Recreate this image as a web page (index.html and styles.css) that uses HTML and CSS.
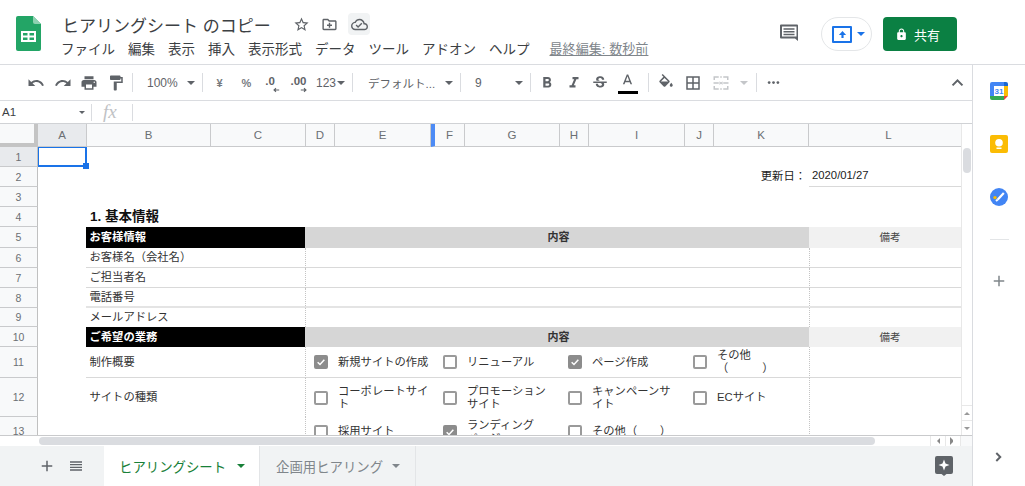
FILE: index.html
```html
<!DOCTYPE html>
<html lang="ja">
<head>
<meta charset="utf-8">
<title>ヒアリングシート のコピー</title>
<link rel="stylesheet" href="styles.css">
</head>
<body>
<header class="topbar">
  <svg class="logo" viewBox="0 0 25 35"><path d="M2 0h15l8 8v25a2 2 0 0 1-2 2H2a2 2 0 0 1-2-2V2a2 2 0 0 1 2-2z" fill="#23a566"/><path d="M17 0l8 8h-6a2 2 0 0 1-2-2z" fill="#8ed1b1"/><path d="M5 15h15v11H5zm2 2v2.5h4.5V17zm6.500 0v2.500H18V17zM7 21.500V24h4.500v-2.500zm6.500 0V24H18v-2.500z" fill="#fff" fill-rule="evenodd"/></svg>
  <div class="titleblock">
    <div class="titlerow">
      <span class="doctitle">ヒアリングシート のコピー</span>
      <svg class="ticon star" viewBox="0 0 24 24"><path d="M22 9.240l-7.190-.62L12 2 9.190 8.630 2 9.240l5.460 4.730L5.820 21 12 17.270 18.180 21l-1.630-7.030L22 9.240zM12 15.400l-3.760 2.270 1-4.280-3.320-2.880 4.380-.38L12 6.100l1.710 4.040 4.380.38-3.320 2.880 1 4.280L12 15.400z"/></svg>
      <svg class="ticon folder" viewBox="0 0 24 24"><path d="M20 6h-8l-2-2H4c-1.100 0-2 .9-2 2v12c0 1.100.9 2 2 2h16c1.100 0 2-.9 2-2V8c0-1.100-.9-2-2-2zm0 12H4V6h5.170l2 2H20v10zm-9-1.500h2V14h2.500v-2H13V9.500h-2V12H8.500v2H11z"/></svg>
      <span class="cloudbox"><svg class="ticon" viewBox="0 0 24 24"><path d="M19.350 10.040C18.670 6.590 15.640 4 12 4 9.110 4 6.600 5.640 5.350 8.040 2.340 8.360 0 10.910 0 14c0 3.310 2.690 6 6 6h13c2.760 0 5-2.240 5-5 0-2.640-2.050-4.780-4.650-4.960zM19 18H6c-2.210 0-4-1.790-4-4 0-2.050 1.530-3.760 3.560-3.970l1.070-.11.5-.95C8.080 7.140 9.940 6 12 6c2.620 0 4.880 1.860 5.390 4.430l.3 1.500 1.530.11c1.560.1 2.780 1.410 2.780 2.960 0 1.650-1.350 3-3 3zm-9-3.820l-2.090-2.090L6.500 13.500 10 17l6.010-6.010-1.410-1.410z"/></svg></span>
    </div>
    <nav class="menus">
      <span>ファイル</span><span>編集</span><span>表示</span><span>挿入</span><span>表示形式</span><span>データ</span><span>ツール</span><span>アドオン</span><span>ヘルプ</span><a class="lastedit">最終編集: 数秒前</a>
    </nav>
  </div>
  <div class="topright">
    <svg class="commenticon" viewBox="0 0 20 20"><path d="M2 1.500h16a1 1 0 0 1 1 1v15.500L16 15.500H2a1 1 0 0 1-1-1v-12a1 1 0 0 1 1-1zm1 2v10h14.500l0 .6 0-10.600zM4.500 5.200h11v1.500h-11zm0 2.800h11v1.500h-11zm0 2.800h11v1.500h-11z" fill="#5f6368" fill-rule="evenodd"/></svg>
    <div class="present"><span class="presentbox"><svg viewBox="0 0 10 10"><path d="M5 1L9 5.500H6.200V9H3.800V5.500H1z" fill="#1a73e8"/></svg></span><i class="caret blue"></i></div>
    <div class="share"><svg viewBox="0 0 24 24"><path d="M18 8h-1V6c0-2.760-2.240-5-5-5S7 3.240 7 6v2H6c-1.100 0-2 .9-2 2v10c0 1.100.9 2 2 2h12c1.100 0 2-.9 2-2V10c0-1.100-.9-2-2-2zm-6 9c-1.100 0-2-.9-2-2s.9-2 2-2 2 .9 2 2-.9 2-2 2zm3.100-9H8.900V6c0-1.710 1.390-3.100 3.100-3.100 1.710 0 3.100 1.390 3.100 3.100v2z"/></svg><span>共有</span></div>
  </div>
</header>
<div class="body">
  <main class="main">
    <div class="toolbar">
      <span class="btn b1"><svg viewBox="0 0 24 24"><path d="M12.500 8c-2.650 0-5.050.99-6.900 2.600L2 7v9h9l-3.620-3.620c1.390-1.160 3.160-1.880 5.120-1.880 3.540 0 6.550 2.310 7.600 5.500l2.370-.78C21.080 11.030 17.150 8 12.500 8z"/></svg></span>
      <span class="btn"><svg viewBox="0 0 24 24"><path d="M18.400 10.600C16.550 8.990 14.150 8 11.500 8c-4.650 0-8.580 3.030-9.960 7.220L3.900 16c1.050-3.190 4.050-5.500 7.600-5.500 1.950 0 3.730.72 5.120 1.880L13 16h9V7l-3.600 3.600z"/></svg></span>
      <span class="btn"><svg viewBox="0 0 24 24"><path d="M19 8H5c-1.660 0-3 1.340-3 3v6h4v4h12v-4h4v-6c0-1.660-1.340-3-3-3zm-3 11H8v-5h8v5zm3-7c-.55 0-1-.45-1-1s.45-1 1-1 1 .45 1 1-.45 1-1 1zm-1-9H6v4h12V3z"/></svg></span>
      <span class="btn"><svg viewBox="0 0 24 24"><path d="M18 4V3c0-.55-.45-1-1-1H5c-.55 0-1 .45-1 1v4c0 .55.45 1 1 1h12c.55 0 1-.45 1-1V6h1v4H9v11c0 .55.45 1 1 1h2c.55 0 1-.45 1-1v-9h8V4h-3z"/></svg></span>
      <i class="sep s1"></i>
      <span class="combo zoom">100%<i class="caret"></i></span>
      <i class="sep"></i>
      <span class="fmt f1">¥</span><span class="fmt">%</span>
      <span class="fmt dec d1"><b>.0</b><svg viewBox="0 0 10 6"><path d="M9 3H3M5 .8L2.500 3 5 5.200" fill="none" stroke="#5f6368" stroke-width="1.300"/></svg></span>
      <span class="fmt dec d2"><b>.00</b><svg viewBox="0 0 10 6"><path d="M1 3h6M5 .8L7.500 3 5 5.200" fill="none" stroke="#5f6368" stroke-width="1.300"/></svg></span>
      <span class="num">123<i class="caret"></i></span>
      <i class="sep"></i>
      <span class="combo font">デフォルト...<i class="caret"></i></span>
      <i class="sep"></i>
      <span class="combo size">9<i class="caret"></i></span>
      <i class="sep"></i>
      <span class="btn b3"><svg viewBox="0 0 24 24"><path d="M15.600 10.790c.97-.67 1.650-1.770 1.650-2.790 0-2.260-1.750-4-4-4H7v14h7.040c2.090 0 3.710-1.700 3.710-3.790 0-1.520-.86-2.820-2.150-3.420zM10 6.500h3c.83 0 1.500.67 1.500 1.500s-.67 1.500-1.500 1.500h-3v-3zm3.500 9H10v-3h3.500c.83 0 1.500.67 1.500 1.500s-.67 1.500-1.500 1.500z"/></svg></span>
      <span class="btn"><svg viewBox="0 0 24 24"><path d="M10 4v3h2.210l-3.420 8H6v3h8v-3h-2.210l3.420-8H18V4z"/></svg></span>
      <span class="btn"><svg viewBox="0 0 24 24"><path d="M7.240 8.750c-.26-.48-.39-1.030-.39-1.670 0-.61.13-1.160.4-1.670.26-.5.63-.93 1.110-1.290.48-.35 1.050-.63 1.700-.83.66-.19 1.390-.29 2.180-.29.81 0 1.540.11 2.210.34.66.22 1.230.54 1.690.94.47.4.83.88 1.080 1.430.25.55.38 1.150.38 1.810h-3.010c0-.31-.05-.59-.15-.85-.09-.27-.24-.49-.44-.68-.2-.19-.45-.33-.75-.44-.3-.1-.66-.16-1.060-.16-.39 0-.74.04-1.030.13-.29.09-.53.21-.72.36-.19.16-.34.34-.44.55-.1.21-.15.43-.15.66 0 .48.25.88.74 1.210.38.25.77.48 1.410.7H7.390c-.05-.08-.11-.17-.15-.25zM21 12v-2H3v2h9.620c.18.07.4.14.55.2.37.17.66.34.87.51.21.17.35.36.43.57.07.2.11.43.11.69 0 .23-.05.45-.14.66-.09.2-.23.38-.42.53-.19.15-.42.26-.71.35-.29.08-.63.13-1.010.13-.43 0-.83-.04-1.180-.13s-.66-.23-.91-.42c-.25-.19-.45-.44-.59-.75-.14-.31-.25-.76-.25-1.210H6.400c0 .55.08 1.130.24 1.580.16.45.37.85.65 1.210.28.35.6.66.98.92.37.26.78.48 1.220.65.44.17.9.3 1.380.39.48.08.96.13 1.440.13.8 0 1.530-.09 2.180-.28s1.210-.45 1.670-.79c.46-.34.82-.77 1.070-1.270s.38-1.070.38-1.710c0-.6-.1-1.140-.31-1.610-.05-.11-.11-.23-.17-.33H21z"/></svg></span>
      <span class="btn color"><svg viewBox="0 0 24 24"><path d="M11 2L5.500 16h2.250l1.120-3h6.250l1.120 3h2.250L13 2h-2zm-1.380 9L12 4.670 14.380 11H9.620z"/></svg><i class="colorbar"></i></span>
      <i class="sep s2"></i>
      <span class="btn b4"><svg viewBox="0 0 24 24"><path d="M16.560 8.940L7.620 0 6.210 1.410l2.380 2.380-5.150 5.150c-.59.59-.59 1.540 0 2.120l5.500 5.500c.29.29.68.44 1.060.44s.77-.15 1.060-.44l5.500-5.500c.59-.58.59-1.530 0-2.120zM5.210 10L10 5.210 14.790 10H5.210zM19 11.500s-2 2.170-2 3.500c0 1.100.9 2 2 2s2-.9 2-2c0-1.330-2-3.500-2-3.500z"/></svg></span>
      <span class="btn"><svg viewBox="0 0 24 24"><path d="M3 3v18h18V3H3zm8 16H5v-6h6v6zm0-8H5V5h6v6zm8 8h-6v-6h6v6zm0-8h-6V5h6v6z"/></svg></span>
      <span class="btn merge"><svg viewBox="0 0 24 24"><path d="M2 3h7v2H4v3H2zm9 0h2v2h-2zm4 0h7v5h-2V5h-5zM2 11h7v2H2zm13 0h7v2h-7zM10 9.500L12.500 12 10 14.500zm4 0L11.500 12 14 14.500zM2 16h2v3h5v2H2zm9 3h2v2h-2zm9-3h2v5h-7v-2h5z"/></svg></span>
      <i class="caret dim"></i>
      <i class="sep s3"></i>
      <span class="btn more"><svg viewBox="0 0 24 24"><circle cx="5" cy="12" r="2.200"/><circle cx="12" cy="12" r="2.200"/><circle cx="19" cy="12" r="2.200"/></svg></span>
      <span class="collapse"><svg viewBox="0 0 24 24"><path d="M12 7l-8 8 2 2 6-6 6 6 2-2z"/></svg></span>
    </div>
    <div class="formula">
      <span class="namebox">A1<i class="caret small"></i></span>
      <i class="fsep"></i>
      <span class="fx">fx</span>
      <i class="fsep"></i>
    </div>
    <div class="sheetwrap">
      <div class="grid">
        <div class="ch corner"></div><div class="ch sel">A</div><div class="ch">B</div><div class="ch">C</div><div class="ch">D</div><div class="ch">E</div><div class="ch freeze">F</div><div class="ch">G</div><div class="ch">H</div><div class="ch">I</div><div class="ch">J</div><div class="ch">K</div><div class="ch">L</div>

        <div class="rh sel">1</div><div class="c active"><i class="handle"></i></div><div class="c span11"></div>
        <div class="rh">2</div><div class="c span11 right">更新日：</div><div class="c line up1">2020/01/27</div>
        <div class="rh">3</div><div class="c span12"></div>
        <div class="rh">4</div><div class="c"></div><div class="c span11 heading">1. 基本情報</div>

        <div class="rh">5</div><div class="c"></div><div class="c span2 black">お客様情報</div><div class="c span8 gray">内容</div><div class="c pale">備考</div>
        <div class="rh">6</div><div class="c"></div><div class="c span2 line">お客様名（会社名）</div><div class="c span8 line dot"></div><div class="c line dot"></div>
        <div class="rh">7</div><div class="c"></div><div class="c span2 line">ご担当者名</div><div class="c span8 line dot"></div><div class="c line dot"></div>
        <div class="rh">8</div><div class="c"></div><div class="c span2 line thick">電話番号</div><div class="c span8 line thick dot"></div><div class="c line thick dot"></div>
        <div class="rh">9</div><div class="c"></div><div class="c span2">メールアドレス</div><div class="c span8 dot"></div><div class="c dot"></div>
        <div class="rh">10</div><div class="c"></div><div class="c span2 black">ご希望の業務</div><div class="c span8 gray">内容</div><div class="c pale">備考</div>

        <div class="rh">11</div><div class="c"></div><div class="c span2 line">制作概要</div>
        <div class="c box line dot first"><span class="cb on"><svg viewBox="0 0 12 12"><path d="M2 6.200L4.800 9 10 3.300" fill="none" stroke="#fff" stroke-width="1.800"/></svg></span></div><div class="c opt line">新規サイトの作成</div>
        <div class="c box line fbox"><span class="cb"></span></div><div class="c opt line gopt">リニューアル</div>
        <div class="c box line"><span class="cb on"><svg viewBox="0 0 12 12"><path d="M2 6.200L4.800 9 10 3.300" fill="none" stroke="#fff" stroke-width="1.800"/></svg></span></div><div class="c opt line">ページ作成</div>
        <div class="c box line"><span class="cb"></span></div><div class="c opt line">その他<br>（　　　）</div>
        <div class="c line dot"></div>

        <div class="rh">12</div><div class="c"></div><div class="c span2">サイトの種類</div>
        <div class="c box dot first"><span class="cb"></span></div><div class="c opt">コーポレートサイ<br>ト</div>
        <div class="c box fbox"><span class="cb"></span></div><div class="c opt gopt">プロモーション<br>サイト</div>
        <div class="c box"><span class="cb"></span></div><div class="c opt">キャンペーンサ<br>イト</div>
        <div class="c box"><span class="cb"></span></div><div class="c opt">ECサイト</div>
        <div class="c dot"></div>

        <div class="rh">13</div><div class="c"></div><div class="c span2"></div>
        <div class="c box dot first"><span class="cb"></span></div><div class="c opt">採用サイト</div>
        <div class="c box fbox"><span class="cb on"><svg viewBox="0 0 12 12"><path d="M2 6.200L4.800 9 10 3.300" fill="none" stroke="#fff" stroke-width="1.800"/></svg></span></div><div class="c opt gopt">ランディング<br>ページ</div>
        <div class="c box"><span class="cb"></span></div><div class="c opt">その他（　　）</div>
        <div class="c"></div><div class="c"></div>
        <div class="c dot"></div>
      </div>
      <div class="vscroll">
        <i class="vthumb"></i>
        <span class="varrow"><i class="tri up"></i></span>
        <span class="varrow"><i class="tri down"></i></span>
      </div>
    </div>
    <div class="hscroll">
      <i class="hthumb"></i>
      <span class="harrow"><i class="tri left"></i></span>
      <span class="harrow"><i class="tri right"></i></span>
      <span class="hcorner"></span>
    </div>
    <div class="tabs">
      <svg class="tabicon plus" viewBox="0 0 24 24"><path d="M19 13h-6v6h-2v-6H5v-2h6V5h2v6h6z"/></svg>
      <svg class="tabicon list" viewBox="0 0 24 24"><path d="M3 5h18v2H3zm0 4h18v2H3zm0 4h18v2H3zm0 4h18v2H3z"/></svg>
      <div class="tab current">ヒアリングシート<i class="caret green"></i></div>
      <div class="tab other">企画用ヒアリング<i class="caret light"></i></div>
      <svg class="explore" viewBox="0 0 18 20"><path d="M2 0h14a2 2 0 0 1 2 2v14a2 2 0 0 1-2 2h-4.500L9 20l-2.500-2H2a2 2 0 0 1-2-2V2a2 2 0 0 1 2-2z" fill="#5f6368"/><path d="M9 3.500l1.500 4 4 1.500-4 1.500-1.500 4-1.500-4-4-1.500 4-1.500z" fill="#fff"/></svg>
    </div>
  </main>
  <aside class="side">
    <svg class="app cal" viewBox="0 0 18 18"><path d="M2 0h13v4H4v10H0V2a2 2 0 0 1 2-2z" fill="#4285f4"/><path d="M14 0h2a2 2 0 0 1 2 2v3h-4z" fill="#1967d2"/><path d="M14 4h4v10h-4z" fill="#fbbc04"/><path d="M0 14h14v4H2a2 2 0 0 1-2-2z" fill="#34a853"/><path d="M14 14h4l-4 4z" fill="#ea4335"/><rect x="4" y="4" width="10" height="10" fill="#fff"/><text x="9" y="12" class="caltext">31</text></svg>
    <svg class="app keep" viewBox="0 0 18 18"><rect width="18" height="18" rx="2" fill="#fbbc04"/><circle cx="9" cy="7.800" r="3.800" fill="#fff"/><rect x="6.500" y="12.500" width="5" height="1.500" fill="#fff"/></svg>
    <svg class="app tasks" viewBox="0 0 18 18"><circle cx="9" cy="9" r="9" fill="#4285f4"/><path d="M7.800 11.500l6-6.500" stroke="#fff" stroke-width="2.200"/><circle cx="5" cy="9.600" r="1.700" fill="#fbbc04"/><path d="M6 13l1.800-1.500" stroke="#fff" stroke-width="2"/></svg>
    <i class="sidesep"></i>
    <svg class="sideplus" viewBox="0 0 24 24"><path d="M19 13h-6v6h-2v-6H5v-2h6V5h2v6h6z"/></svg>
    <svg class="sidechev" viewBox="0 0 24 24"><path d="M9 5L6.900 7.100 11.800 12l-4.900 4.900L9 19l7-7z"/></svg>
  </aside>
</div>
</body>
</html>
```
FILE: styles.css
```css
* { box-sizing: border-box; }
html, body { margin: 0; height: 486px; overflow: hidden; background: #fff; }
body {
  width: 1025px;
  font-family: "Liberation Sans", "Noto Sans CJK JP", sans-serif;
  color: #3c4043;
  display: flex;
  flex-direction: column;
}
i { display: block; font-style: normal; }

.topbar {
  height: 65px;
  flex: none;
  display: flex;
  padding-left: 16px;
  border-bottom: 1px solid #dadce0;
}
.logo { width: 25px; height: 35px; margin-top: 16px; flex: none; }
.titleblock { margin-left: 21px; width: 640px; }
.titlerow { display: flex; align-items: center; height: 24px; margin-top: 12px; }
.doctitle { font-size: 17px; width: 231px; white-space: nowrap; color: #3c4043; }
.ticon { width: 17px; height: 17px; fill: #5f6368; display: block; }
.folder { margin-left: 11px; }
.cloudbox {
  width: 22px; height: 22px; margin-left: 10px;
  background: #f1f3f4; border-radius: 4px;
  display: flex; align-items: center; justify-content: center;
}
.menus { display: flex; font-size: 13.5px; margin-top: 5px; line-height: 17px; white-space: nowrap; margin-left: -1px; }
.menus span { margin-right: 13px; color: #3c4043; }
.lastedit { margin-left: 7px; color: #80868b; font-size: 13.100px; text-decoration: underline; }
.topright { display: flex; margin-left: auto; padding-right: 68px; }
.commenticon { width: 20px; height: 20px; margin-top: 23px; }
.present {
  width: 51px; height: 34px; margin: 17px 0 0 22px;
  border: 1px solid #e4e6e8; border-radius: 17px;
  display: flex; align-items: center; padding-left: 10px;
}
.presentbox {
  width: 20px; height: 17px; border: 2px solid #1a73e8; border-radius: 1px;
  display: flex; align-items: center; justify-content: center;
}
.presentbox svg { width: 9px; height: 9px; }
.present .caret { margin-left: 5px; }
.share {
  width: 74px; height: 34px; margin: 17px 0 0 11px;
  background: #0b8043; border-radius: 4px; color: #fff;
  display: flex; align-items: center; font-size: 13px; padding-left: 12px;
}
.share svg { width: 13px; height: 13px; fill: #fff; margin-right: 6px; }

.caret {
  width: 0; height: 0; flex: none;
  border-left: 4.5px solid transparent;
  border-right: 4.5px solid transparent;
  border-top: 4.5px solid #5f6368;
}
.caret.blue { border-top-color: #1a73e8; border-left-width: 4px; border-right-width: 4px; border-top-width: 4px; }
.caret.dim { border-top-color: #c4c6c9; margin-left: 5px; }
.caret.small { border-left-width: 3px; border-right-width: 3px; border-top-width: 3px; margin-left: auto; margin-right: 6px; }
.caret.green { border-top-color: #188038; margin-left: 11px; border-left-width: 4px; border-right-width: 4px; border-top-width: 4px; }
.caret.light { border-top-color: #80868b; margin-left: 9px; border-left-width: 4px; border-right-width: 4px; border-top-width: 4px; }

.body { flex: 1; display: flex; min-height: 0; }
.main { width: 973px; flex: none; display: flex; flex-direction: column; border-right: 1px solid #dadce0; }
.side { flex: 1; position: relative; display: flex; flex-direction: column; align-items: center; }

.toolbar {
  height: 36px; flex: none; display: flex; align-items: center;
  padding-left: 23px; border-bottom: 1px solid #dadce0;
  color: #5f6368; font-size: 12px;
}
.btn { width: 26.5px; height: 24px; display: flex; align-items: center; justify-content: center; flex: none; }
.btn svg { width: 18px; height: 18px; fill: #5f6368; display: block; }
.sep { width: 1px; height: 19px; background: #dadce0; flex: none; }
.s1 { margin-left: 3px; }
.s2 { margin-left: 7px; }
.s3 { margin-left: 8.500px; margin-right: 3.500px; }
.combo { display: flex; align-items: center; flex: none; white-space: nowrap; }
.combo .caret { margin-left: auto; margin-right: 7px; }
.zoom { width: 69px; padding-left: 14px; }
.font { width: 107px; padding-left: 15px; font-size: 11.500px; }
.size { width: 69px; padding-left: 14px; }
.fmt { width: 27px; flex: none; text-align: center; font-size: 11px; font-weight: bold; color: #777b7f; }
.f1 { margin-left: 3px; }
.dec { display: flex; flex-direction: column; align-items: center; height: 21px; margin-top: 5px; color: #5f6368; }
.dec b { line-height: 12px; font-weight: bold; font-size: 11.500px; }
.dec svg { width: 8px; height: 6px; display: block; margin-top: 0; }
.d1 b { margin-right: 7px; }
.d1 svg { margin-left: 5px; }
.d2 b { margin-right: 4px; }
.d2 svg { margin-left: 7px; }
.num { width: 38px; flex: none; display: flex; align-items: center; padding-left: 2px; }
.num .caret { border-left-width: 4px; border-right-width: 4px; border-top-width: 4px; margin-left: 1px; }
.b3 { margin-left: 3px; }
.b4 { margin-left: 4px; }
.color { flex-direction: column; position: relative; margin-left: 1px; }
.color svg { height: 17px; width: 17px; margin-top: 1px; }
.colorbar { width: 20px; height: 3px; background: #000; margin-top: 1px; }
.merge { margin-left: 2px; }
.merge svg { fill: #c4c6c9; }
.more svg { width: 15px; height: 15px; }
.collapse { margin-left: auto; margin-right: 6px; display: flex; }
.collapse svg { width: 17px; height: 17px; fill: #5f6368; }

.formula {
  height: 23px; flex: none; display: flex; align-items: center;
  border-bottom: 1px solid #d0d2d5;
}
.namebox { width: 91px; display: flex; align-items: center; padding-left: 2px; font-size: 11.500px; color: #3c4043; }
.fsep { width: 1px; height: 17px; background: #dadce0; flex: none; }
.fx {
  width: 40px; padding-left: 11px; font-family: "Liberation Serif", serif; font-style: italic;
  font-size: 19px; color: #c0c2c5; line-height: 20px;
}

.sheetwrap { display: flex; height: 311px; flex: none; overflow: hidden; }
.grid {
  width: 961px; height: 311px; overflow: hidden; flex: none;
  display: grid;
  grid-template-columns: 38px 49px 124px 95px 29px 96px 34px 95px 29px 96px 29px 95px 160px;
  grid-template-rows: 23px 20px 20px 20px 20px 21px 20px 20px 20px 19px 20px 31px 39px 29px;
  font-size: 11.300px; color: #333;
}
.ch, .rh {
  background: #f8f9fa; color: #6b6f73; display: flex; align-items: center; justify-content: center;
  font-size: 11.500px; border-right: 1px solid #c9cacc; border-bottom: 1px solid #c9cacc;
}
.rh { font-size: 10.500px; border-right: 1px solid #c0c0c0; }
.ch.sel, .rh.sel { background: #e8eaed; }
.corner { border-right: 4px solid #c4c4c4; border-bottom: 4px solid #c4c4c4; }
.freeze { border-left: 4px solid #4d8bf5; }
.c { display: flex; align-items: center; min-width: 0; padding-left: 3px; white-space: nowrap; overflow: hidden; line-height: 13px; }
.span2 { grid-column: span 2; margin-left: -1px; padding-left: 3.500px; }
.span8 { grid-column: span 8; margin-left: -1px; }
.span11 { grid-column: span 11; }
.span12 { grid-column: span 12; }
.span11.heading { margin-left: -1px; padding-left: 4px; padding-bottom: 2px; }
.right { justify-content: flex-end; padding-right: 3px; color: #222; padding-bottom: 2px; }
.line { border-bottom: 1px solid #d9d9d9; }
.up1 { padding-bottom: 2px; color: #222; }
.thick { border-bottom-width: 2px; border-bottom-color: #e4e4e4; }
.heading { font-size: 13.500px; font-weight: bold; color: #111; }
.black { background: #000; color: #fff; font-weight: bold; }
.gray { background: #d6d6d6; justify-content: center; font-weight: bold; color: #333; font-size: 11px; }
.pale { background: #f1f1f1; justify-content: center; font-size: 10.500px; color: #444; padding-left: 2px; }
.dot { border-left: 1px dotted #c4c4c4; }
.first { margin-left: -1px; }
.active { border: 2px solid #1a73e8; border-left-width: 1px; border-top-width: 1px; position: relative; overflow: visible; z-index: 1; }
.handle {
  position: absolute; right: -4px; bottom: -4px; width: 6px; height: 6px;
  background: #1a73e8;
}
.box { justify-content: center; padding-left: 0; }
.fbox { padding-left: 3px; }
.gopt { padding-left: 2px; }
.opt { font-size: 11.300px; }
.cb { width: 14px; height: 14px; border: 2px solid #9a9a9a; border-radius: 2px; display: block; flex: none; }
.cb.on { background: #8c8c8c; border-color: #8c8c8c; }
.cb svg { width: 10px; height: 10px; display: block; }

.vscroll { width: 11px; border-left: 1px solid #e8e8e8; display: flex; flex-direction: column; align-items: center; padding-top: 24px; }
.vthumb { width: 8px; height: 25px; background: #dadce0; border-radius: 4px; margin-bottom: auto; }
.varrow { width: 100%; height: 15px; display: flex; align-items: center; justify-content: center; border-top: 1px solid #e8e8e8; }
.tri { width: 0; height: 0; border: 3px solid transparent; }
.tri.up { border-bottom-color: #999; border-top-width: 0; }
.tri.down { border-top-color: #999; border-bottom-width: 0; }
.tri.left { border-right-color: #888; border-left-width: 0; }
.tri.right { border-left-color: #888; border-right-width: 0; }

.hscroll {
  height: 11px; flex: none; display: flex; align-items: center;
  border-top: 1px solid #c9cacc; background: #fff; padding-left: 39px;
}
.hthumb { width: 836px; height: 8px; background: #dadce0; border-radius: 4px; margin-right: auto; }
.harrow { width: 15px; height: 10px; display: flex; align-items: center; justify-content: center; border-left: 1px solid #e8e8e8; }
.hcorner { width: 12px; height: 10px; border-left: 1px solid #e8e8e8; background: #f8f9fa; }

.tabs { flex: 1; background: #f1f3f4; display: flex; align-items: stretch; padding-left: 38px; }
.tabicon { width: 18px; height: 18px; fill: #5f6368; align-self: center; flex: none; }
.tabicon.list { width: 16px; height: 16px; margin-left: 12px; }
.tab {
  width: 156px; padding-left: 15px; font-size: 13.400px; color: #80868b;
  display: flex; align-items: center; white-space: nowrap; flex: none;
  border-right: 1px solid #e3e5e7;
}
.tab.other { padding-left: 16px; }
.tab.current { background: #fff; color: #188038; margin-left: 20px; }
.explore { width: 18px; height: 20px; margin: auto 19px auto auto; align-self: center; }

.app { display: block; width: 18px; height: 18px; flex: none; }
.cal { margin-top: 17px; }
.keep { margin-top: 35px; }
.tasks { margin-top: 35px; }
.caltext { font-size: 8px; font-weight: bold; fill: #4285f4; text-anchor: middle; font-family: "Liberation Sans", sans-serif; }
.sidesep { width: 19px; height: 1px; background: #e3e5e7; margin-top: 33px; }
.sideplus { width: 18px; height: 18px; fill: #80868b; margin-top: 32px; }
.sidechev { width: 16px; height: 16px; fill: #5f6368; margin-top: auto; margin-bottom: 21px; }
```
